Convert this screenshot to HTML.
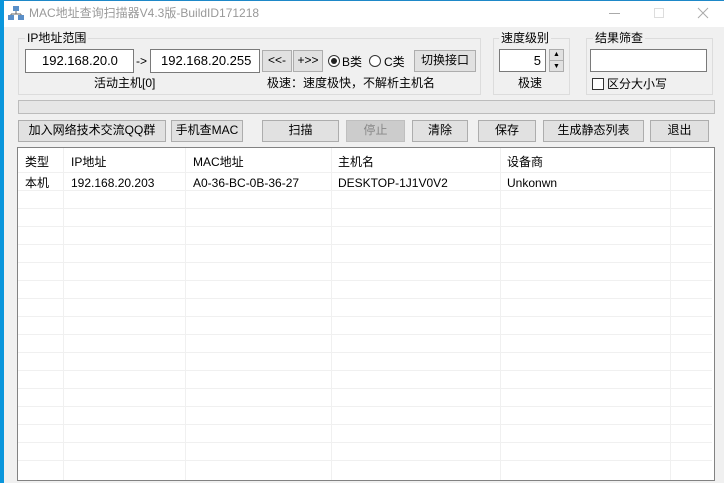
<!DOCTYPE html><html><head><meta charset="utf-8"><style>
*{margin:0;padding:0;box-sizing:border-box}
body{width:724px;height:483px;background:#f0f0f0;position:relative;overflow:hidden;font-family:"Liberation Sans","Noto Sans CJK SC",sans-serif;font-size:12px;color:#000}
.a{position:absolute}
.grp{position:absolute;border:1px solid #dcdcdc}
.lbl{position:absolute;background:#f0f0f0;padding:0 2px;top:-8px;font-size:12px;line-height:14px}
.inp{position:absolute;background:#fff;border:1px solid #7a7a7a;font-size:13px;line-height:21px}
.btn{position:absolute;background:#e1e1e1;border:1px solid #adadad;text-align:center;font-size:12px;line-height:19px}
.t{position:absolute;white-space:nowrap;line-height:14px}
.h{position:absolute;left:0;width:694px;height:1px;background:#f0f0f0}
.v{position:absolute;top:0;width:1px;height:332px;background:#f0f0f0}
</style></head><body>
<div class="a" style="left:0;top:1px;width:724px;height:26px;background:#fff"></div>
<div class="a" style="left:0;top:0;width:724px;height:1px;background:#1e88c8"></div>
<svg class="a" style="left:7px;top:6px" width="18" height="16"><rect x="6" y="0" width="6" height="5" fill="#5a8fc8"/><rect x="1" y="9" width="6" height="5" fill="#5a8fc8"/><rect x="11" y="9" width="6" height="5" fill="#5a8fc8"/><path d="M9 5v3M4 8h10M4 8v1M14 8v1" stroke="#666" fill="none"/></svg>
<div class="t" style="left:29px;top:6px;color:#999;font-size:12px">MAC地址查询扫描器V4.3版-BuildID171218</div>
<div class="a" style="left:609px;top:13px;width:11px;height:1px;background:#aaa"></div>
<div class="a" style="left:654px;top:8px;width:10px;height:10px;border:1px solid #ddd"></div>
<svg class="a" style="left:697px;top:7px" width="12" height="12"><path d="M1 1L11 11M11 1L1 11" stroke="#aaa" stroke-width="1"/></svg>
<div class="a" style="left:0;top:0;width:4px;height:483px;background:#0a96dc"></div>

<div class="grp" style="left:18px;top:38px;width:463px;height:57px"><div class="lbl" style="left:6px">IP地址范围</div></div>
<div class="inp" style="left:25px;top:49px;width:109px;height:24px;padding-left:16px">192.168.20.0</div>
<div class="t" style="left:136px;top:54px">-&gt;</div>
<div class="inp" style="left:150px;top:49px;width:110px;height:24px;padding-left:10px">192.168.20.255</div>
<div class="btn" style="left:262px;top:50px;width:30px;height:22px">&lt;&lt;-</div>
<div class="btn" style="left:293px;top:50px;width:30px;height:22px">+&gt;&gt;</div>
<div class="a" style="left:328px;top:55px;width:12px;height:12px;border:1px solid #333;border-radius:50%;background:#fff"><div class="a" style="left:2px;top:2px;width:6px;height:6px;border-radius:50%;background:#222"></div></div>
<div class="t" style="left:342px;top:55px">B类</div>
<div class="a" style="left:369px;top:55px;width:12px;height:12px;border:1px solid #333;border-radius:50%;background:#fff"></div>
<div class="t" style="left:384px;top:55px">C类</div>
<div class="btn" style="left:414px;top:50px;width:62px;height:22px">切换接口</div>
<div class="t" style="left:94px;top:76px">活动主机[0]</div>
<div class="t" style="left:267px;top:76px">极速：速度极快，不解析主机名</div>

<div class="grp" style="left:493px;top:38px;width:77px;height:57px"><div class="lbl" style="left:5px">速度级别</div></div>
<div class="inp" style="left:499px;top:49px;width:47px;height:23px;text-align:right;padding-right:4px">5</div>
<div class="a" style="left:549px;top:49px;width:15px;height:23px;border:1px solid #adadad;background:#e1e1e1"><div class="t" style="left:3px;top:-2px;font-size:7px">▲</div><div class="a" style="left:0;top:10px;width:13px;height:1px;background:#adadad"></div><div class="t" style="left:3px;top:10px;font-size:7px">▼</div></div>
<div class="t" style="left:518px;top:76px">极速</div>

<div class="grp" style="left:586px;top:38px;width:127px;height:57px"><div class="lbl" style="left:6px">结果筛查</div></div>
<div class="inp" style="left:590px;top:49px;width:117px;height:23px"></div>
<div class="a" style="left:592px;top:78px;width:12px;height:12px;border:1px solid #333;background:#fff"></div>
<div class="t" style="left:607px;top:77px">区分大小写</div>

<div class="a" style="left:18px;top:100px;width:697px;height:14px;border:1px solid #bcbcbc;background:#e6e6e6"></div>

<div class="btn" style="left:18px;top:120px;width:148px;height:22px">加入网络技术交流QQ群</div>
<div class="btn" style="left:171px;top:120px;width:72px;height:22px">手机查MAC</div>
<div class="btn" style="left:262px;top:120px;width:77px;height:22px">扫描</div>
<div class="btn" style="left:346px;top:120px;width:59px;height:22px;background:#ccc;border-color:#bfbfbf;color:#888">停止</div>
<div class="btn" style="left:412px;top:120px;width:56px;height:22px">清除</div>
<div class="btn" style="left:478px;top:120px;width:58px;height:22px">保存</div>
<div class="btn" style="left:543px;top:120px;width:101px;height:22px">生成静态列表</div>
<div class="btn" style="left:650px;top:120px;width:59px;height:22px">退出</div>

<div class="a" style="left:17px;top:147px;width:698px;height:334px;border:1px solid #828282;background:#fff;overflow:hidden">
<div class="v" style="left:45px"></div><div class="v" style="left:167px"></div><div class="v" style="left:313px"></div><div class="v" style="left:482px"></div><div class="v" style="left:652px"></div>
<div class="h" style="top:24px"></div><div class="h" style="top:42px"></div><div class="h" style="top:60px"></div><div class="h" style="top:78px"></div><div class="h" style="top:96px"></div><div class="h" style="top:114px"></div><div class="h" style="top:132px"></div><div class="h" style="top:150px"></div><div class="h" style="top:168px"></div><div class="h" style="top:186px"></div><div class="h" style="top:204px"></div><div class="h" style="top:222px"></div><div class="h" style="top:240px"></div><div class="h" style="top:258px"></div><div class="h" style="top:276px"></div><div class="h" style="top:294px"></div><div class="h" style="top:312px"></div>
<div class="t" style="left:7px;top:7px">类型</div><div class="t" style="left:53px;top:7px">IP地址</div><div class="t" style="left:175px;top:7px">MAC地址</div><div class="t" style="left:320px;top:7px">主机名</div><div class="t" style="left:489px;top:7px">设备商</div>
<div class="t" style="left:7px;top:28px">本机</div><div class="t" style="left:53px;top:28px">192.168.20.203</div><div class="t" style="left:175px;top:28px">A0-36-BC-0B-36-27</div><div class="t" style="left:320px;top:28px">DESKTOP-1J1V0V2</div><div class="t" style="left:489px;top:28px">Unkonwn</div>
</div>
</body></html>
